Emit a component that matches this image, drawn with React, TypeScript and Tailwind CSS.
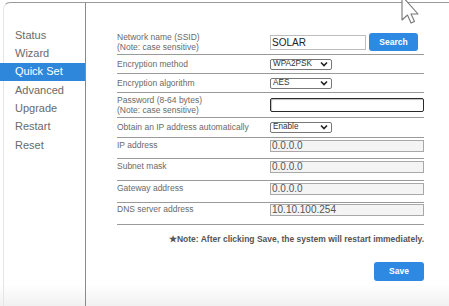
import React from 'react';

const menu = ['Status', 'Wizard', 'Quick Set', 'Advanced', 'Upgrade', 'Restart', 'Reset'];

const Chevron = () => (
  <svg width="8" height="6" viewBox="0 0 8 6" className="shrink-0">
    <polyline points="1,1.5 4,4.5 7,1.5" fill="none" stroke="#222" strokeWidth="1.6" />
  </svg>
);

const Select = ({ value }: { value: string }) => (
  <div className="flex items-center justify-between w-[62px] h-[11px] border border-[#777] rounded-[2px] bg-white pl-[2px] pr-[3px] text-[8.2px] leading-none text-[#333]">
    <span>{value}</span>
    <Chevron />
  </div>
);

const Field = ({ value }: { value: string }) => (
  <div className="w-[156px] h-[12px] border border-[#a8a8a8] bg-[#f4f4f4] pl-[1px] text-[10px] leading-[10px] text-[#555]">
    {value}
  </div>
);

const Label = ({ lines }: { lines: string[] }) => (
  <div className="w-[153px] shrink-0 text-[8.5px] leading-[10px] text-[#6a6a6a]">
    {lines.map((l) => (
      <div key={l}>{l}</div>
    ))}
  </div>
);

export default function App() {
  return (
    <div className="relative w-[449px] h-[306px] overflow-hidden bg-[linear-gradient(to_bottom,#fff_93%,#f1f1f1)] font-['Liberation_Sans',Arial,sans-serif]">
      <div className="mt-[2px] ml-[3px] h-[304px] flex border-t border-l border-t-[#9a9a9a] border-l-[#e6e6e6] rounded-tl-[7px]">
        <div className="w-[82px] shrink-0 border-r border-[#8a8a8a] pt-[23px]">
          {menu.map((m) => (
            <div
              key={m}
              className={
                m === 'Quick Set'
                  ? '-ml-[4px] w-[85px] h-[18.3px] pl-[15px] flex items-center text-[11px] bg-[#2f87dc] text-white'
                  : '-ml-[4px] w-[85px] h-[18.3px] pl-[15px] flex items-center text-[11px] text-[#6a6a6a]'
              }
            >
              {m}
            </div>
          ))}
        </div>

        <div className="flex-1 pl-[31px] pt-[28px]">
          <div className="w-[307px] flex flex-col">
            <div className="h-[24px] flex items-center border-b border-[#9a9a9a] pb-[1px]">
              <Label lines={['Network name (SSID)', '(Note: case sensitive)']} />
              <div className="w-[96px] h-[15px] border border-[#bdbdbd] bg-white pl-[1px] text-[10px] leading-[13px] text-[#222]">
                SOLAR
              </div>
              <button className="ml-[3px] w-[49px] h-[18px] rounded-[3px] bg-[#2e89e3] text-white text-[8.5px] font-bold">
                Search
              </button>
            </div>

            <div className="h-[19px] flex items-center border-b border-[#9a9a9a]">
              <Label lines={['Encryption method']} />
              <Select value="WPA2PSK" />
            </div>

            <div className="h-[19px] flex items-center border-b border-[#9a9a9a]">
              <Label lines={['Encryption algorithm']} />
              <Select value="AES" />
            </div>

            <div className="h-[25px] flex items-center border-b border-[#9a9a9a] pb-[1px]">
              <Label lines={['Password (8-64 bytes)', '(Note: case sensitive)']} />
              <div className="w-[155px] h-[14px] border-[1.5px] border-[#2a2a2a] rounded-[2px] bg-white shadow-[inset_1px_1px_1px_rgba(0,0,0,0.25)]" />
            </div>

            <div className="h-[19.5px] flex items-center border-b border-[#9a9a9a]">
              <Label lines={['Obtain an IP address automatically']} />
              <Select value="Enable" />
            </div>

            <div className="h-[21.5px] flex items-start pt-[2px] border-b border-[#9a9a9a]">
              <Label lines={['IP address']} />
              <Field value="0.0.0.0" />
            </div>

            <div className="h-[22px] flex items-start pt-[2px] border-b border-[#9a9a9a]">
              <Label lines={['Subnet mask']} />
              <Field value="0.0.0.0" />
            </div>

            <div className="h-[21.5px] flex items-start pt-[2px] border-b border-[#9a9a9a]">
              <Label lines={['Gateway address']} />
              <Field value="0.0.0.0" />
            </div>

            <div className="h-[22px] flex items-start pt-[1.5px] border-b border-[#9a9a9a]">
              <Label lines={['DNS server address']} />
              <Field value="10.10.100.254" />
            </div>

            <div className="mt-[9.5px] text-right text-[8.5px] leading-[10px] font-bold text-[#555]">
              ★Note: After clicking Save, the system will restart immediately.
            </div>

            <button className="mt-[18px] self-end w-[50px] h-[18.5px] rounded-[3px] bg-[#2e89e3] text-white text-[8.5px] font-bold">
              Save
            </button>
          </div>
        </div>
      </div>

      <svg className="absolute left-[399px] top-[-5px]" width="22" height="30" viewBox="0 0 22 30">
        <path
          d="M3 1 L3 25 L8.5 20 L12 28 L15.5 26.5 L12 19 L19 19 Z"
          fill="#fff"
          stroke="#777"
          strokeWidth="1.1"
          strokeLinejoin="round"
        />
      </svg>
    </div>
  );
}
